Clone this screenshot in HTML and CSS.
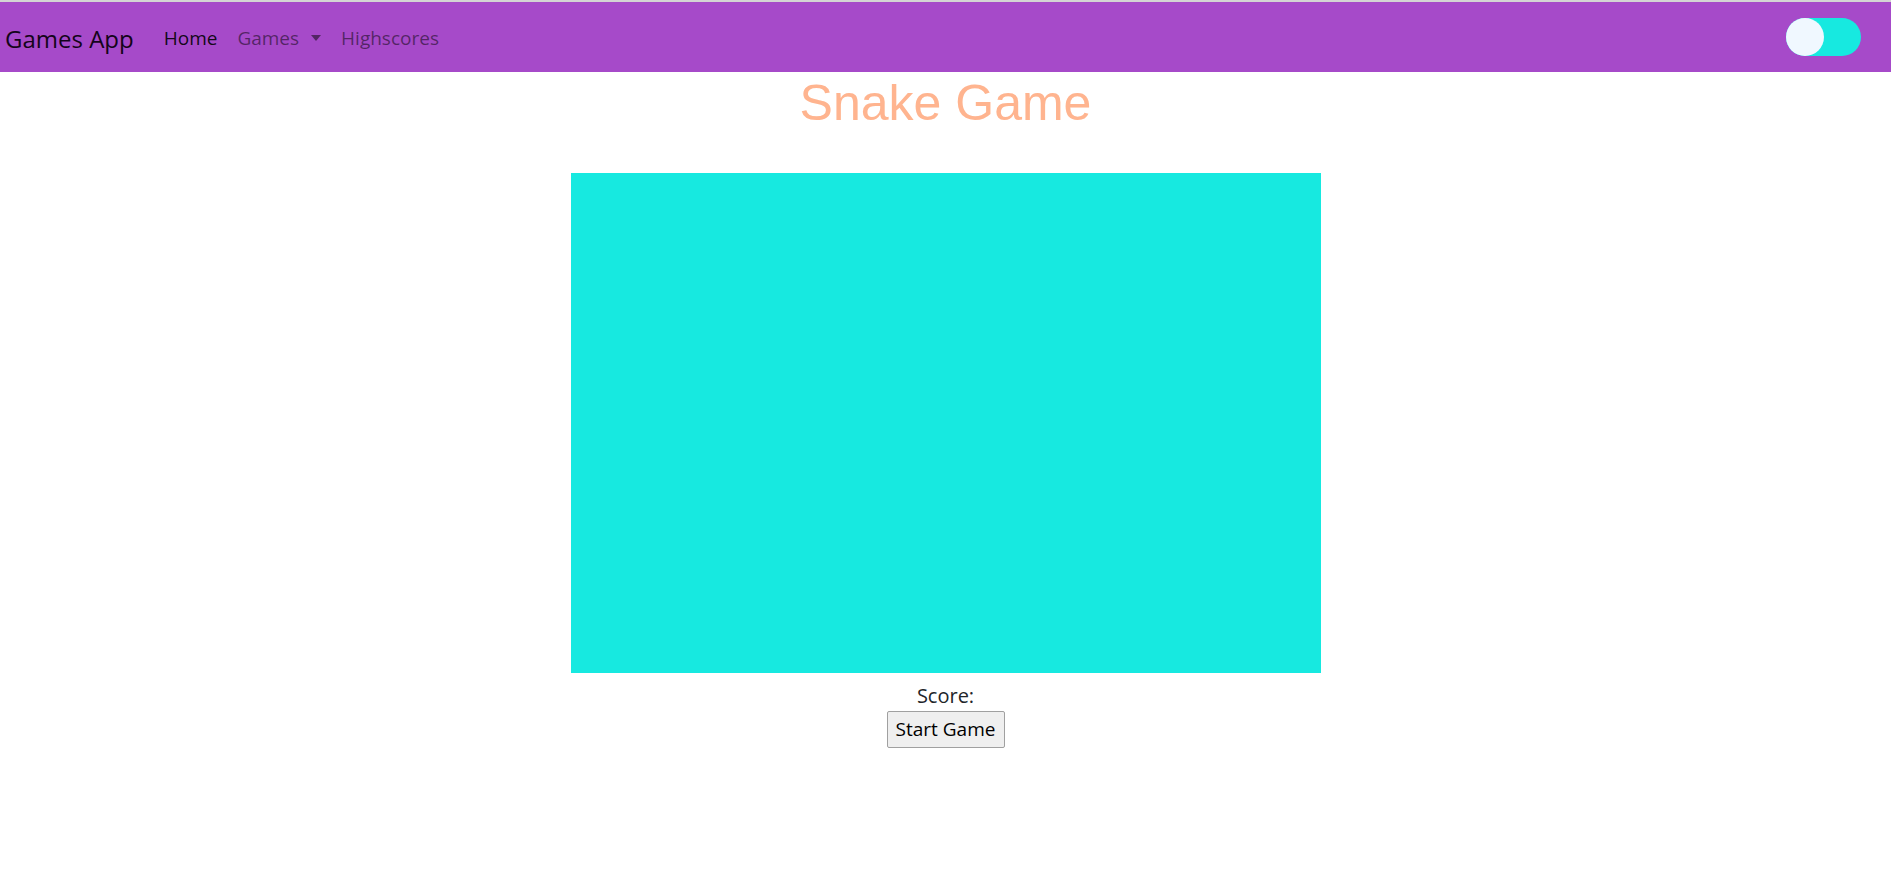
FILE: index.html
```html
<!DOCTYPE html>
<html lang="en">
<head>
<meta charset="utf-8">
<title>Snake Game</title>
<link rel="stylesheet" href="styles.css">
</head>
<body>
<div class="topline"></div>
<nav class="navbar">
  <a class="brand" href="#">Games App</a>
  <ul class="nav">
    <li><a class="nav-link active" href="#">Home</a></li>
    <li><a class="nav-link" href="#">Games <span class="caret"></span></a></li>
    <li><a class="nav-link" href="#">Highscores</a></li>
  </ul>
  <div class="toggle"><span class="knob"></span></div>
</nav>
<main class="game">
  <h1 class="title">Snake Game</h1>
  <div class="board"></div>
  <div class="score">Score: </div>
  <button class="start">Start Game</button>
</main>
</body>
</html>
```
FILE: styles.css
```css
* { box-sizing: border-box; }
html, body { margin: 0; padding: 0; }
body {
  font-family: "Open Sans", "Noto Sans", sans-serif;
  font-size: 20px;
  line-height: 1.5;
  color: #212529;
  background: #fff;
}
.topline { height: 2px; background: #d4d4d4; }
.navbar {
  height: 70px;
  background: #a64ac9;
  display: flex;
  align-items: center;
  padding: 0 30px 0 5px;
}
.brand {
  font-size: 24px;
  color: #14041a;
  text-decoration: none;
  margin-right: 30px;
  margin-top: 4px;
}
.nav {
  list-style: none;
  margin: 2px 0 0;
  padding: 0;
  display: flex;
  flex: 1;
}
.nav-link {
  display: inline-flex;
  align-items: center;
  font-size: 19px;
  padding: 0 10px;
  color: rgba(0,0,0,0.5);
  text-decoration: none;
}
.nav-link.active { color: rgba(0,0,0,0.9); }
.nav li:first-child .nav-link { padding-left: 0; }
.caret {
  display: inline-block;
  width: 0;
  height: 0;
  margin-left: 12px;
  border-top: 6px solid rgba(0,0,0,0.5);
  border-left: 5px solid transparent;
  border-right: 5px solid transparent;
}
.toggle {
  width: 75px;
  height: 38px;
  border-radius: 19px;
  background: #17e9e0;
  display: flex;
  align-items: center;
}
.knob {
  width: 38px;
  height: 38px;
  border-radius: 50%;
  background: #f0f8ff;
}
.game {
  display: flex;
  flex-direction: column;
  align-items: center;
}
.title {
  font-family: "Liberation Sans", Arial, sans-serif;
  font-size: 50px;
  font-weight: 400;
  line-height: 1.2;
  color: #ffb48f;
  margin: 1px 0 40px;
}
.board {
  width: 750px;
  height: 500px;
  background: #17e9e0;
}
.score {
  margin-top: 8px;
  line-height: 30px;
}
.start {
  font-family: inherit;
  font-size: 19px;
  line-height: 1.2;
  color: #000;
  width: 118px;
  height: 37px;
  padding: 0;
  background: #efefef;
  border: 1px solid #a0a0a0;
  border-radius: 2px;
}
```
